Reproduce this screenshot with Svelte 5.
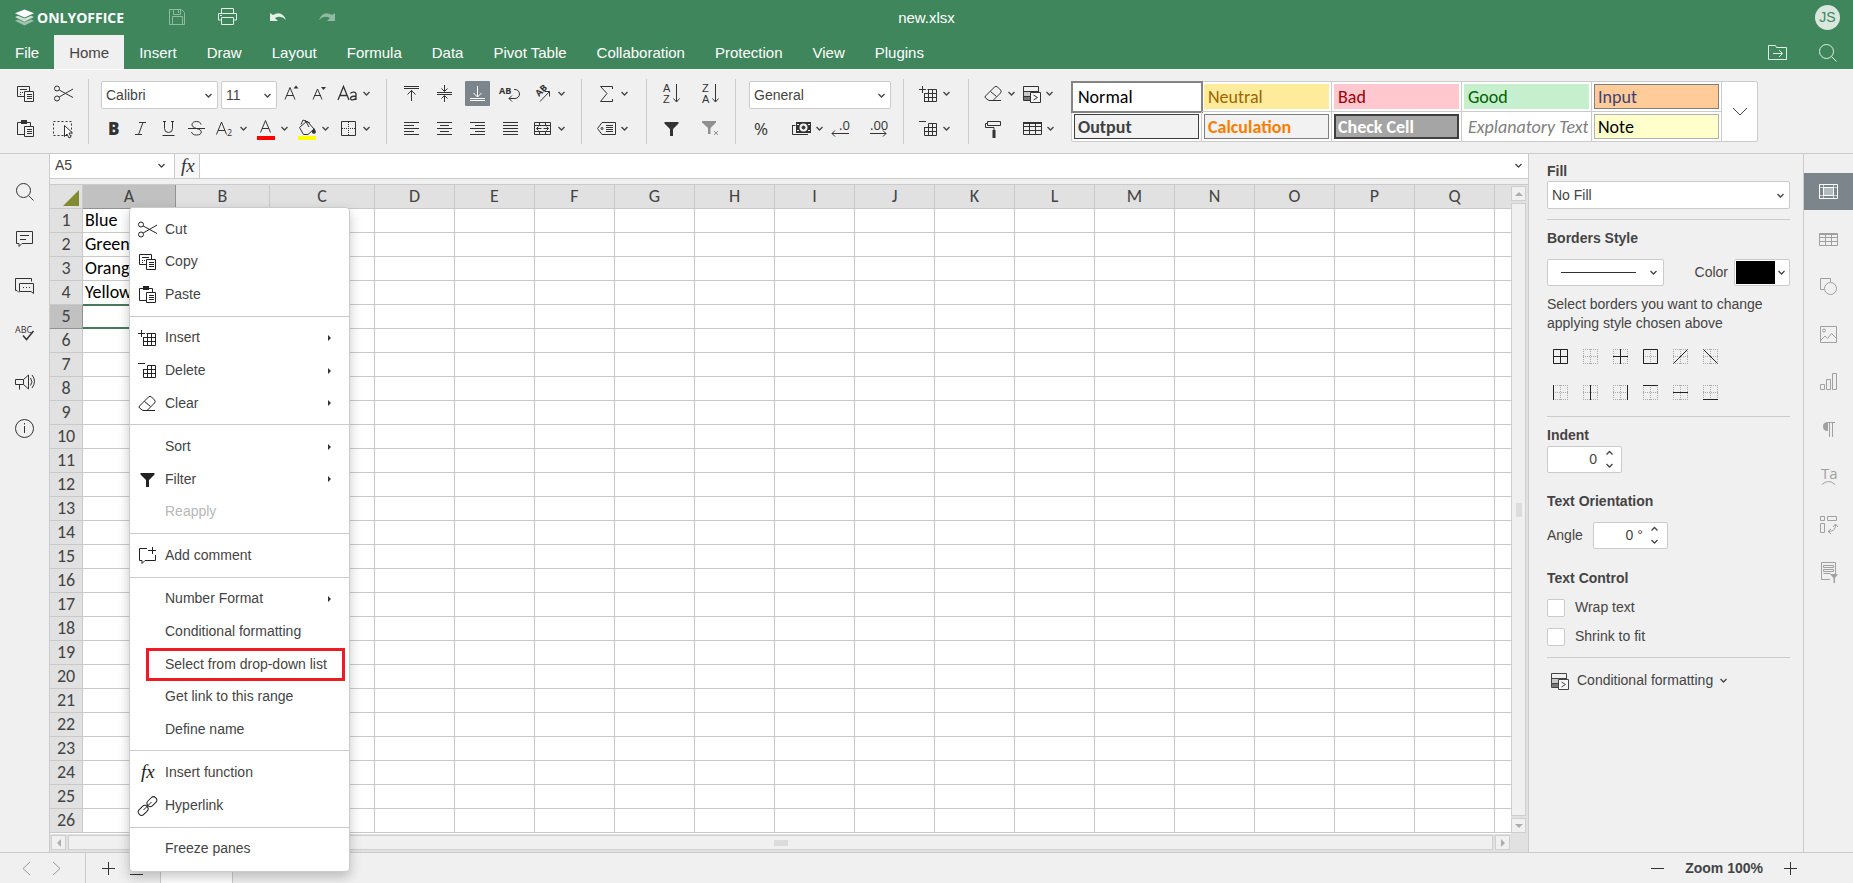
<script>
  // Spreadsheet editor window: header, ribbon, grid with its context menu, cell settings panel.
  const txt = (x, y, size, s, extra = '') =>
    `<text x="${x}" y="${y}" font-size="${size}" fill="currentColor" stroke="none" font-family="Open Sans, sans-serif" ${extra}>${s}</text>`;
  const letter = (y, s) =>
    `<text x="4" y="${y}" font-size="11" fill="currentColor" stroke="none" font-family="Liberation Sans, sans-serif">${s}</text>`;
  const p = (d, extra = '') => `<path d="${d}" ${extra}/>`;
  const solid = 'fill="currentColor" stroke="none"';

  // Icons are drawn on a 25px square.
  const icons = {
    copy: p('M11 15.5H4.5V5.5H16.5V10M7 8.5h7M7 11.5h1M9 11.5h1M7 13.5h1') + p('M11.5 10.5h9v10h-9zM14 13.5h5M14 15.5h5M14 17.5h5'),
    cut: '<circle cx="6" cy="7.5" r="2.5"/><circle cx="6" cy="17.5" r="2.5"/>' + p('M8.2 9 22 16.5M8.2 16 22 8'),
    paste: p('M11 18.5H4.5V6.5H17.5V10') + p('M8 4h6v4H8z', solid) + p('M11.5 10.5h9v10h-9zM14 13.5h5M14 15.5h5M14 17.5h5'),
    selectAll: p('M2.5 5.5H20.5V19.5H2.5Z', 'stroke-dasharray="2 2"') + p('M13.5 9.5v11l2.5-2.5 2 4 2-1-2-4h3.5z', 'fill="#fff"'),
    bold: txt(7, 19, 17, 'B', 'font-weight="800"'),
    italic: p('M10 6.5h7M6 18.5h7M14 6.5 9.5 18.5'),
    underline: p('M7.5 5v7.5a4 4 0 0 0 8 0V5M5.5 19.5h12M6 5.5h3M14 5.5h3'),
    strike: p('M16 8.5c-.5-2-2-3-4.5-3s-4.5 1-4.5 3 1.5 3 4.5 4 4.800 1.5 4.800 3.5-2 3-4.800 3-4.5-1-5-3M3 12.5h17'),
    subscript: p('M3.5 18.5 8.5 6 13.5 18.5M5 14.5h7') + txt(14, 20, 9, '2'),
    fontColor: p('M6.5 16.5 11.5 4.5 16.5 16.5M8 12.5h7') + p('M3 20h18v4H3z', 'fill="#f00" stroke="none"'),
    fillColor: p('M4.5 11.5 12 5l7 8-6 5.5H8.5zM6 8.5 8 4l7 3M10 4l4 7') + p('M19 12c2 3 2.5 4 1 5.5-2 .8-3.5-.5-3-2.5z', solid) + p('M3 20h18v4H3z', 'fill="#ff0" stroke="none"'),
    borders: p('M5.5 5.5h14v14h-14z') + p('M12.5 6v13M6 12.5h13', 'stroke-dasharray="1 1"'),
    fontUp: p('M5 18.5 10 6.5 15 18.5M6.5 14.5h7') + p('M13.5 7.5l2.5-3 2.5 3z', solid),
    fontDown: p('M5 18.5 9.5 8 14 18.5M6.5 14.5h6.5') + p('M13 6h5l-2.5 3z', solid),
    changeCase: p('M2 19 7.500 5.500 13 19M4 14.500h7.500', 'stroke-width="1.3"') + p('M20 19v-6c0-2.500-4.500-2.500-5.500-.5M20 15c-3.500 0-5.500.5-5.500 2.300 0 2.500 4 2 5.500-.5', 'stroke-width="1.3"'),
    alignTop: p('M5 5.5h15M5 7.5h15M12.5 9v11M8.5 13.5l4-4 4 4'),
    alignMiddle: p('M5 11.5h15M5 13.5h15M12.5 4v6M9.5 7.5l3 3 3-3M12.5 21v-6M9.5 17.5l3-3 3 3'),
    alignBottom: p('M5 17.5h15M5 19.5h15M12.5 5v11M8.5 12l4 4 4-4'),
    wrap: txt(1, 13, 9, 'AB', 'font-weight="700"') + p('M16 8.5h1a4 4 0 0 1 0 9h-6M14 14.5l-3 3 3 3'),
    orient: txt(0, 0, 9, 'AB', 'font-weight="700" transform="translate(8 16) rotate(-45)"') + p('M9 20.5 18.5 10.5M14 10.5h4.5v5'),
    left: p('M5 6.5h15M5 9.5h10M5 12.5h15M5 15.5h10M5 18.5h15'),
    center: p('M5 6.5h15M8 9.5h9M5 12.5h15M8 15.5h9M5 18.5h15'),
    right: p('M5 6.5h15M10 9.5h10M5 12.5h15M10 15.5h10M5 18.5h15'),
    justify: p('M5 6.5h15M5 9.5h15M5 12.5h15M5 15.5h15M5 18.5h15'),
    merge: p('M3.5 6.5h16v12h-16zM3 9.5h17M3 15.5h17M8.5 6v3M14.5 6v3M8.5 16v3M14.5 16v3M5.5 12.5h5M12.5 12.5h5M7.5 10.5l-2 2 2 2M15.5 10.5l2 2-2 2'),
    sum: p('M18.5 8V5.5H6.5L13 12.5 6.5 20.5h12V18'),
    tag: p('M8 6.5h13.5v12H8L3.5 12.5zM12 9.5h7M12 11.5h7M12 13.5h7M12 15.5h7') + '<circle cx="8" cy="12.5" r="1"/>',
    sortAsc: letter(11, 'A') + letter(22, 'Z') + p('M17.5 3v18M14.5 17.5l3 3.500 3-3.500'),
    sortDesc: letter(11, 'Z') + letter(22, 'A') + p('M17.5 3v18M14.5 17.5l3 3.500 3-3.500'),
    filter: p('M5.5 6h14v1.500L14 13v7h-3v-7L5.5 7.500z', solid),
    clearFilter: p('M4 5h14v1.500L12.500 12v6H10v-6L4 6.500z', solid) + p('M16 15l4 4M20 15l-4 4'),
    percent: txt(5, 19, 17, '%'),
    money: p('M7 6h15v11H7z', solid) + '<circle cx="14.500" cy="11.500" r="4" fill="#f0f0f0" stroke="none"/><circle cx="14.500" cy="11.500" r="1.500" fill="currentColor"/>' + p('M8 8.500h2M19 8.500h2M8 14.500h2M19 14.500h2', 'stroke="#f0f0f0"') + p('M3.500 9v9.500H19M3.500 9.500h3'),
    decLess: txt(10, 14, 13, '.0') + p('M3 17.5h17M6 14.5l-3 3 3 3'),
    decMore: txt(4, 14, 13, '.00') + p('M4 17.5h16M17 14.5l3 3-3 3'),
    insertCells: p('M3 8.5h7M6.5 5v7') + p('M8 20.5h12.5V8.5h-9M8.5 12v8M8 12.5h12.5M8 16.5h12.5M12.5 8.5v12M16.5 8.5v12'),
    deleteCells: p('M3 5.5h7') + p('M8.5 11v8.5h12v-12h-8M8 11.5h12.5M8 15.5h12.5M12.5 7.5v12M16.5 7.5v12'),
    eraser: p('M4.5 15 13.5 6q1.500-1.500 3 0l3 3q1.500 1.500 0 3l-7.500 7.500H8L4.500 17q-1-1 0-2zM9.500 10.500l6 5M8 19.500h12'),
    condFormat: p('M5 10h15v5H5z', 'fill="#c8c8c8" stroke="none"') + p('M5 15h8v5H5z', 'fill="#777" stroke="none"') + p('M4.5 5.5h15V11M4.5 5.5v14H11M4.5 10.5h15M4.5 15.5H11') + p('M11.5 11.5h10v10h-10z', 'fill="#f8f8f8"') + p('M14.5 14l4 2.500-4 2.500'),
    brush: p('M6.5 5.5h13v4h-13zM6 7.5H4.500v4h8.500V14') + p('M11.500 14h3v8h-3z', solid),
    table: p('M3.5 6.5h18v12h-18zM3 10.5h19M3 14.5h19M9.5 8v11M15.5 8v11') + p('M3 6h19v2H3z', solid),
    comment: p('M4.5 5.5h16v12H10l-3 3v-3H4.500zM8 9.500h9M8 13.500h6'),
    chat: p('M3.5 4.500h16v3M3.500 4.500v12H5l2 2M7.500 9.500h14v10l-2.500-2H7.500zM11 13.500h1M14 13.500h1M17 13.500h1'),
    spell: txt(3, 12, 9, 'ABC') + p('M11 14.500l3.500 4 7-8.500', 'stroke-width="1.5"'),
    speaker: p('M3.5 10.5h8l5-4.5v14l-5-4.500H3.500zM7.500 16v4.500M11.500 10.500v5M18.500 9q3 4 0 7.500M20 6q5 6 0 13'),
    info: '<circle cx="12.5" cy="12.5" r="9"/>' + p('M12.5 10v7M12.5 7v1.500'),
    search: '<circle cx="11.5" cy="11.5" r="7"/>' + p('M16.5 16.5l5 5'),
    addComment: p('M12 5.5H4.5v12H7v3l3-3h10.500V12M13 7.500h8M17.500 4v7'),
    link: '<rect x="-6" y="-3.2" width="11" height="6.5" rx="3.2" transform="translate(8.5 17) rotate(-45)"/><rect x="-5" y="-3.2" width="11" height="6.5" rx="3.2" transform="translate(16.5 9) rotate(-45)"/>' + p('M8.5 17l8-8'),
    fx: `<text x="6" y="18" font-size="19" font-style="italic" fill="currentColor" stroke="none" font-family="Liberation Serif, serif">fx</text>`,
    save: p('M4.5 4.500h12l3 3v12h-15zM8.500 4.500v5h7v-5M13.500 5v3M7.500 19v-7.500h10V19'),
    print: p('M6.5 8V3.500h12V8M6.500 15H3.500V8.500h18V15h-3M6.500 12.500h12v7h-12zM5 10.500h2'),
    undo: p('M5 8v8h8l-3-3q6-3.500 11 2-4-10-13-5z', solid),
    redo: p('M20 8v8h-8l3-3q-6-3.500-11 2 4-10 13-5z', solid),
    folder: p('M3.5 19.5v-14h7l1 2h10v12zM8 13.500h9M14 10l3.500 3.500-3.500 3.500'),
    cellSet: p('M3.5 5.5h18v14h-18z') + p('M3.5 8.5h18M3.5 16.5h18M7.5 5.5v14M17.5 5.5v14', 'opacity=".6"') + p('M7.5 8.5h10v8h-10z', 'fill="#b5babf"'),
    tableSet: p('M3.5 6.5h18v12h-18zM3 10.5h19M3 14.5h19M9.5 6v12.500M15.500 6v12.500M3 7.500h19'),
    shape: p('M8 15.5H4.5V4.500h10V8') + '<circle cx="14.500" cy="14.500" r="6"/>',
    image: p('M4.5 4.500h16v16h-16zM5 18l4-4 2.500 2.500 4-5 5 5') + '<circle cx="8" cy="8.500" r="1.500"/>',
    chart: p('M4.5 15.5h4v5h-4zM10.5 10.5h4v10h-4zM16.5 4.500h4v16h-4z'),
    paragraph: p('M12 5v9Q7 14 7 9.500T12 5z', solid) + p('M11 5.500h8M13.500 5v15M16.500 5v15'),
    textArt: txt(5, 15, 15, 'Ta') + p('M6 20.500q6.500-6 13 0'),
    pivot: p('M4.5 4.500h4v4h-4zM11.500 4.500h9v4h-9zM4.500 11.500h4v9h-4zM12 19.500q8 0 7.500-7M17 15l2.500-3 2.500 3M15 17l-3 2.500 3 2.500'),
    slicer: p('M14 20.500H5.500v-17h14V15M7.500 6.500h10v2h-10zM7.500 10.500h10v2h-10zM7.500 14.500h7') + p('M14 15h8l-3 4v5h-1.500v-5z', solid),
    minus: p('M6 12.5h13'),
    plus: p('M6 12.5h13M12.5 6v13'),
    prev: p('M16 6l-7 6.500 7 6.500'),
    next: p('M9 6l7 6.500-7 6.500'),
    list: p('M6 10.500h13M6 14.500h13M6 18.500h13'),
  };

  const tabs = ['File', 'Home', 'Insert', 'Draw', 'Layout', 'Formula', 'Data', 'Pivot Table', 'Collaboration', 'Protection', 'View', 'Plugins'];

  const styles = [
    ['Normal', 'normal'], ['Neutral', 'neutral'], ['Bad', 'bad'], ['Good', 'good'], ['Input', 'input'],
    ['Output', 'output'], ['Calculation', 'calc'], ['Check Cell', 'check'], ['Explanatory Text', 'expl'], ['Note', 'note'],
  ];

  const columns = 'ABCDEFGHIJKLMNOPQ'.split('');
  const rows = Array.from({ length: 26 }, (_, i) => i + 1);
  const values = { 1: 'Blue', 2: 'Green', 3: 'Orange', 4: 'Yellow' };
  const activeRow = 5;

  const menu = [
    { label: 'Cut', icon: 'cut' }, { label: 'Copy', icon: 'copy' }, { label: 'Paste', icon: 'paste' }, null,
    { label: 'Insert', icon: 'insertCells', sub: true }, { label: 'Delete', icon: 'deleteCells', sub: true }, { label: 'Clear', icon: 'eraser', sub: true }, null,
    { label: 'Sort', sub: true }, { label: 'Filter', icon: 'filter', sub: true }, { label: 'Reapply', disabled: true }, null,
    { label: 'Add comment', icon: 'addComment' }, null,
    { label: 'Number Format', sub: true }, { label: 'Conditional formatting' }, { label: 'Select from drop-down list', marked: true },
    { label: 'Get link to this range' }, { label: 'Define name' }, null,
    { label: 'Insert function', icon: 'fx' }, { label: 'Hyperlink', icon: 'link' }, null,
    { label: 'Freeze panes' },
  ];

  const leftRail = [['search', 'Find'], ['comment', 'Comments'], ['chat', 'Chat'], ['spell', 'Spell checking'], ['speaker', 'Feedback'], ['info', 'About']];
  const rightRail = [
    ['cellSet', 'Cell settings'], ['tableSet', 'Table settings'], ['shape', 'Shape settings'], ['image', 'Image settings'], ['chart', 'Chart settings'],
    ['paragraph', 'Paragraph settings'], ['textArt', 'Text Art settings'], ['pivot', 'Pivot table settings'], ['slicer', 'Slicer settings'],
  ];

  // Solid line of each border preset, over the dotted 15px square.
  const presets = [
    ['All', 'M.5.5h14v14H.5zM7.5 0v15M0 7.5h15'], ['None', ''], ['Inside', 'M7.5 0v15M0 7.5h15'],
    ['Outside', 'M.5.5h14v14H.5z'], ['Diagonal up', 'M.5 14.5l14-14'], ['Diagonal down', 'M.5.5l14 14'],
    ['Left', 'M.5 0v15'], ['Inside vertical', 'M7.5 0v15'], ['Right', 'M14.5 0v15'],
    ['Top', 'M0 .5h15'], ['Inside horizontal', 'M0 7.5h15'], ['Bottom', 'M0 14.5h15'],
  ];

  let tab = $state('Home');
  let wrapText = $state(false);
  let shrink = $state(false);
</script>

{#snippet icon(name)}
  <svg class="icon" viewBox="0 0 25 25" aria-hidden="true">{@html icons[name]}</svg>
{/snippet}

{#snippet caret()}
  <svg class="caret" viewBox="0 0 9 6" aria-hidden="true"><path d="M1.500 1l3 3 3-3" /></svg>
{/snippet}

{#snippet btn(name, label, active = false)}
  <button class="btn" class:active aria-label={label}>{@render icon(name)}</button>
{/snippet}

{#snippet split(name, label)}
  <button class="btn split" aria-label={label}>{@render icon(name)}{@render caret()}</button>
{/snippet}

{#snippet combo(value, label, cls)}
  <span class="combo {cls}">
    <select aria-label={label}><option>{value}</option></select>
    {@render caret()}
  </span>
{/snippet}

{#snippet spinner(id, value)}
  <span class="spinner">
    <input {id} type="text" {value} />
    <span class="steps">
      <button aria-label="Increase"><svg class="caret" viewBox="0 0 9 6"><path d="M1.500 4.500l3-3 3 3" /></svg></button>
      <button aria-label="Decrease">{@render caret()}</button>
    </span>
  </span>
{/snippet}

<div class="app">
  <header>
    <div class="title">
      <div class="brand">
        <svg class="logo" viewBox="0 0 20 18" aria-hidden="true">
          <path d="M0 12l3-1.500 7 3 7-3 3 1.500-10 5z" opacity=".5" />
          <path d="M0 8l3-1.500 7 3 7-3 3 1.500-10 5z" opacity=".75" />
          <path d="M0 4l10-4 10 4-10 4.500z" />
        </svg>
        <span>ONLYOFFICE</span>
      </div>
      <div class="quick">
        <button class="btn faded" aria-label="Save">{@render icon('save')}</button>
        {@render btn('print', 'Print')}
        {@render btn('undo', 'Undo')}
        <button class="btn faded" aria-label="Redo">{@render icon('redo')}</button>
      </div>
      <span class="doc">new.xlsx</span>
      <span class="avatar">JS</span>
    </div>
    <nav>
      {#each tabs as t}
        <button class="tab" class:current={t === tab} onclick={() => (tab = t)}>{t}</button>
      {/each}
      <div class="nav-end">
        {@render btn('folder', 'Open file location')}
        {@render btn('search', 'Search')}
      </div>
    </nav>
  </header>

  <div class="ribbon">
    <div class="group clip">
      <div class="row">{@render btn('copy', 'Copy')}{@render btn('cut', 'Cut')}</div>
      <div class="row">{@render btn('paste', 'Paste')}{@render btn('selectAll', 'Select all')}</div>
    </div>
    <div class="group font">
      <div class="row">
        {@render combo('Calibri', 'Font', 'w-font')}
        {@render combo('11', 'Font size', 'w-size')}
        {@render btn('fontUp', 'Increment font size')}
        {@render btn('fontDown', 'Decrement font size')}
        {@render split('changeCase', 'Change case')}
      </div>
      <div class="row">
        {@render btn('bold', 'Bold')}
        {@render btn('italic', 'Italic')}
        {@render btn('underline', 'Underline')}
        {@render btn('strike', 'Strikethrough')}
        {@render split('subscript', 'Subscript')}
        {@render split('fontColor', 'Font color')}
        {@render split('fillColor', 'Fill color')}
        {@render split('borders', 'Borders')}
      </div>
    </div>
    <div class="group align">
      <div class="row">
        {@render btn('alignTop', 'Align top')}
        {@render btn('alignMiddle', 'Align middle')}
        {@render btn('alignBottom', 'Align bottom', true)}
        {@render btn('wrap', 'Wrap text')}
        {@render split('orient', 'Orientation')}
      </div>
      <div class="row">
        {@render btn('left', 'Align left')}
        {@render btn('center', 'Align center')}
        {@render btn('right', 'Align right')}
        {@render btn('justify', 'Justified')}
        {@render split('merge', 'Merge and center')}
      </div>
    </div>
    <div class="group wide">
      <div class="row">{@render split('sum', 'Summation')}</div>
      <div class="row">{@render split('tag', 'Named ranges')}</div>
    </div>
    <div class="group sort">
      <div class="row">{@render btn('sortAsc', 'Sort ascending')}{@render btn('sortDesc', 'Sort descending')}</div>
      <div class="row">
        {@render btn('filter', 'Filter')}
        <button class="btn faded" aria-label="Clear filter">{@render icon('clearFilter')}</button>
      </div>
    </div>
    <div class="group format">
      <div class="row">{@render combo('General', 'Number format', 'w-format')}</div>
      <div class="row number">
        {@render btn('percent', 'Percent style')}
        {@render split('money', 'Accounting style')}
        {@render btn('decLess', 'Decrease decimal')}
        {@render btn('decMore', 'Increase decimal')}
      </div>
    </div>
    <div class="group wide">
      <div class="row">{@render split('insertCells', 'Insert cells')}</div>
      <div class="row">{@render split('deleteCells', 'Delete cells')}</div>
    </div>
    <div class="group last">
      <div class="row">{@render split('eraser', 'Clear')}{@render split('condFormat', 'Conditional formatting')}</div>
      <div class="row paint">{@render btn('brush', 'Copy style')}{@render split('table', 'Format as table')}</div>
    </div>
    <div class="gallery">
      <div class="swatches">
        {#each styles as [name, cls]}
          <button class="style" class:picked={cls === 'normal'}><span class={cls}>{name}</span></button>
        {/each}
      </div>
      <button class="more" aria-label="More cell styles">
        <svg viewBox="0 0 16 9" aria-hidden="true"><path d="M1 1l7 7 7-7" /></svg>
      </button>
    </div>
  </div>

  <main>
    <aside class="rail">
      <div class="stack left-stack">
        {#each leftRail as [name, label]}
          <button class="rail-btn" aria-label={label}>{@render icon(name)}</button>
        {/each}
      </div>
    </aside>

    <section class="editor">
      <div class="formula">
        <span class="name">
          <input aria-label="Cell name" value="A5" />
          {@render caret()}
        </span>
        <button class="fx" aria-label="Insert function">{@render icon('fx')}</button>
        <input class="expr" aria-label="Formula" />
        <button class="expand" aria-label="Expand formula bar">{@render caret()}</button>
      </div>
      <div class="sheet">
        <div class="cells">
          <table>
            <colgroup>
              <col class="c-num" /><col class="c-a" /><col class="c-b" /><col class="c-c" />
              {#each columns.slice(3) as c (c)}<col class="c-std" />{/each}
              <col />
            </colgroup>
            <thead>
              <tr>
                <th aria-label="Select all"><svg class="corner" viewBox="0 0 16 16"><path d="M16 0v16H0z" /></svg></th>
                {#each columns as c}<th class:hot={c === 'A'}>{c}</th>{/each}
                <th class="rest"></th>
              </tr>
            </thead>
            <tbody>
              {#each rows as r}
                <tr>
                  <th class:hot={r === activeRow}>{r}</th>
                  {#each columns as c}
                    <td class:sel={c === 'A' && r === activeRow}>{c === 'A' ? (values[r] ?? '') : ''}</td>
                  {/each}
                  <td class="rest"></td>
                </tr>
              {/each}
            </tbody>
          </table>
        </div>
        <div class="vscroll">
          <button aria-label="Scroll up"><svg viewBox="0 0 8 8"><path d="M0 6l4-4 4 4z" /></svg></button>
          <div class="track"><i></i></div>
          <button aria-label="Scroll down"><svg viewBox="0 0 8 8"><path d="M0 2l4 4 4-4z" /></svg></button>
        </div>
        <div class="hscroll">
          <button aria-label="Scroll left"><svg viewBox="0 0 8 8"><path d="M6 0L2 4l4 4z" /></svg></button>
          <div class="track"><i></i></div>
          <button aria-label="Scroll right"><svg viewBox="0 0 8 8"><path d="M2 0l4 4-4 4z" /></svg></button>
        </div>
        <div class="scroll-corner"></div>
      </div>
    </section>

    <section class="panel">
      <label class="head" for="fill">Fill</label>
      <span class="combo full">
        <select id="fill"><option>No Fill</option></select>
        {@render caret()}
      </span>
      <hr class="first" />
      <h2 class="head">Borders Style</h2>
      <div class="line-row">
        <button class="pick line" aria-label="Border line style"><span></span>{@render caret()}</button>
        <span class="color-label" id="color-label">Color</span>
        <button class="pick color" aria-labelledby="color-label"><span></span>{@render caret()}</button>
      </div>
      <p>Select borders you want to change applying style chosen above</p>
      <div class="presets">
        {#each presets as [label, d]}
          <button aria-label={label}>
            <svg viewBox="0 0 15 15" aria-hidden="true">
              <path class="dots" d="M0 .5h15M0 7.500h15M0 14.500h15M.5 0v15M7.500 0v15M14.500 0v15" />
              <path {d} />
            </svg>
          </button>
        {/each}
      </div>
      <hr />
      <label class="head indent" for="indent">Indent</label>
      {@render spinner('indent', '0')}
      <h2 class="head orient">Text Orientation</h2>
      <div class="angle">
        <label for="angle">Angle</label>
        {@render spinner('angle', '0 °')}
      </div>
      <h2 class="head control">Text Control</h2>
      <label class="check-row"><input type="checkbox" bind:checked={wrapText} />Wrap text</label>
      <label class="check-row"><input type="checkbox" bind:checked={shrink} />Shrink to fit</label>
      <hr class="end" />
      <button class="cond">{@render icon('condFormat')}Conditional formatting{@render caret()}</button>
    </section>

    <aside class="rail right">
      <div class="stack right-stack">
        {#each rightRail as [name, label], i}
          <button class="rail-btn" class:on={i === 0} aria-label={label}>{@render icon(name)}</button>
        {/each}
      </div>
    </aside>
  </main>

  <footer>
    <div class="sheet-nav">{@render btn('prev', 'Previous sheet')}{@render btn('next', 'Next sheet')}</div>
    <div class="sheet-tools">{@render btn('plus', 'Add sheet')}{@render btn('list', 'List of sheets')}</div>
    <button class="sheet-tab" aria-label="Current sheet"></button>
    <div class="zoom">
      {@render btn('minus', 'Zoom out')}
      <span>Zoom 100%</span>
      {@render btn('plus', 'Zoom in')}
    </div>
  </footer>

  <div class="menu" role="menu">
    {#each menu as item}
      {#if item}
        <button class="item" class:marked={item.marked} role="menuitem" disabled={item.disabled}>
          <span class="slot">{#if item.icon}{@render icon(item.icon)}{/if}</span>
          {item.label}
          {#if item.sub}<svg class="sub" viewBox="0 0 3 6" aria-hidden="true"><path d="M0 0l3 3-3 3z" /></svg>{/if}
        </button>
      {:else}
        <div class="sep" role="separator"></div>
      {/if}
    {/each}
  </div>
</div>

<style>
  :global(body) { margin: 0; background: #f0f0f0; }
  .app {
    --line: #cbcbcb; --text: #444; --green: #40865c; --bg: #f0f0f0;
    position: relative; display: flex; flex-direction: column; height: 100vh; overflow: hidden;
    background: var(--bg); color: var(--text); font: 14px/19px "Liberation Sans", Arial, sans-serif;
  }
  button, input, select { font: inherit; color: inherit; margin: 0; padding: 0; border: 0; background: none; border-radius: 0; }
  input:focus, select:focus { outline: none; }
  .icon { display: block; flex: none; width: 25px; height: 25px; fill: none; stroke: currentColor; stroke-width: 1; }
  .caret { display: block; flex: none; width: 9px; height: 6px; fill: none; stroke: #444; stroke-width: 1.3; }
  .btn { display: flex; align-items: center; flex: none; height: 25px; color: #333; }
  .btn.active { background: #7d858c; color: #fff; border-radius: 1px; }
  .split { width: 38px; gap: 1px; }
  .faded { opacity: .5; }

  /* header */
  header { flex: none; background: var(--green); color: #fff; }
  header .btn { color: #e4efe8; }
  .title { position: relative; display: flex; align-items: center; height: 35px; padding: 0 13px 0 15px; }
  .brand { display: flex; align-items: center; gap: 3px; width: 150px; font: 700 14px/18px "Open Sans", sans-serif; }
  .logo { width: 19px; height: 18px; fill: #fff; }
  .quick { display: flex; gap: 25px; flex: 1; }
  .doc { position: absolute; left: 50%; top: 8px; transform: translateX(-50%); font-size: 15px; }
  .avatar { width: 25px; height: 25px; border-radius: 50%; background: #d9e7de; color: var(--green); text-align: center; line-height: 24px; }
  nav { display: flex; height: 34px; padding-right: 13px; border-bottom: 1px solid #fafafa; }
  .tab { padding: 0 15px; font-size: 15px; color: #fff; }
  .tab.current { background: var(--bg); color: var(--text); }
  .nav-end { display: flex; align-items: center; gap: 25px; margin-left: auto; }

  /* ribbon */
  .ribbon { display: flex; flex: none; height: 65px; padding: 9px 0; border-bottom: 1px solid var(--line); }
  .group { display: flex; flex-direction: column; gap: 10px; flex: none; padding: 2px 12px 0; border-right: 1px solid var(--line); }
  .group.wide { padding-right: 14px; }
  .group.format { padding-left: 13px; }
  .group.last { padding-right: 11px; border: 0; }
  .row { display: flex; align-items: flex-start; height: 25px; }
  .clip .row { gap: 13px; padding-left: 1px; }
  .font .row { gap: 3px; }
  .align .row { gap: 8px; }
  .sort .row { gap: 14px; }
  .number { display: grid; grid-template-columns: 40px 40px 37px 25px; }
  .paint { gap: 14px; }
  .combo { position: relative; display: block; flex: none; box-sizing: border-box; height: 28px; border: 1px solid var(--line); border-radius: 2px; background: #fff; }
  .combo select { appearance: none; width: 100%; height: 100%; padding-left: 4px; background: transparent; }
  .combo .caret { position: absolute; right: 4px; top: 11px; pointer-events: none; }
  .w-font { width: 117px; }
  .w-size { width: 56px; }
  .w-format { width: 142px; }
  .gallery { display: flex; flex: none; height: 59px; margin: 2px 0 0 2px; border: 1px solid var(--line); border-radius: 2px; background: #fff; }
  .swatches { display: grid; grid-template-columns: repeat(5, 130px); grid-template-rows: 30px 29px; }
  .style { padding: 2px; border-right: 1px solid var(--line); border-bottom: 1px solid var(--line); font: 18px/25px Carlito, Lato, sans-serif; text-align: left; }
  .style:nth-child(n + 6) { border-bottom: 0; }
  .style.picked { outline: 2px solid #848484; outline-offset: -1px; }
  .style span { display: block; box-sizing: border-box; height: 25px; padding-left: 3px; border: 1px solid transparent; overflow: hidden; white-space: nowrap; }
  .style .normal { color: #000; }
  .style .neutral { background: #ffeb9c; color: #9c6500; }
  .style .bad { background: #ffc7ce; color: #9c0006; }
  .style .good { background: #c6efce; color: #006100; }
  .style .input { background: #ffcc99; border-color: #7f7f7f; color: #3f3f76; }
  .style .output { background: #f2f2f2; border-color: #3f3f3f; color: #3f3f3f; font-weight: 700; }
  .style .calc { background: #f2f2f2; border-color: #7f7f7f; color: #fa7d00; font-weight: 700; }
  .style .check { background: #a5a5a5; border: 2px solid #3f3f3f; padding-left: 2px; line-height: 23px; color: #fff; font-weight: 700; }
  .style .expl { color: #7f7f7f; font-style: italic; }
  .style .note { background: #ffffcc; border-color: #b2b2b2; color: #000; }
  .more { display: grid; place-items: center; width: 35px; }
  .more svg { width: 16px; height: 9px; fill: none; stroke: #444; }

  /* body */
  main { display: flex; flex: 1; min-height: 0; }
  .rail { flex: none; width: 49px; padding-top: 19px; border-right: 1px solid var(--line); }
  .rail.right { border-right: 0; border-left: 1px solid var(--line); }
  .stack { display: flex; flex-direction: column; justify-content: space-between; }
  .left-stack { height: 274px; }
  .right-stack { height: 417px; }
  .rail-btn { display: grid; place-items: center; height: 37px; color: #333; }
  .right .rail-btn { color: #a0a0a0; }
  .right .rail-btn.on { background: #7d858c; color: #fff; }

  .editor { display: flex; flex-direction: column; flex: 1; min-width: 0; }
  .formula { display: flex; flex: none; height: 24px; background: #fff; border-bottom: 1px solid var(--line); }
  .name { display: flex; align-items: center; width: 124px; border-right: 1px solid var(--line); }
  .name input { flex: 1; min-width: 0; padding: 0 0 2px 5px; }
  .name .caret { margin-right: 8px; }
  .fx { width: 25px; background: #f7f7f7; border-right: 1px solid var(--line); color: #333; }
  .expr { flex: 1; min-width: 0; padding: 0 6px; }
  .expand { padding-right: 5px; }
  .sheet { display: grid; grid-template: minmax(0, 1fr) 18px / minmax(0, 1fr) 17px; flex: 1; min-height: 0; margin-top: 5px; border-top: 1px solid var(--line); }
  .cells { overflow: hidden; background: #fff; }
  table { width: 100%; table-layout: fixed; border-collapse: separate; border-spacing: 0; font: 18px/23px Carlito, Lato, sans-serif; }
  .c-num { width: 33px; }
  .c-a { width: 93px; }
  .c-b { width: 94px; }
  .c-c { width: 105px; }
  .c-std { width: 80px; }
  th, td { box-sizing: border-box; height: 24px; padding: 0; border-right: 1px solid #c9c9c9; border-bottom: 1px solid #c9c9c9; }
  th { background: #e1e1e1; font-weight: 400; color: #444; }
  th.hot { background: #c1c1c1; border-color: #929292; }
  td { padding-left: 2px; color: #000; white-space: nowrap; }
  .rest { border-right: 0; }
  .sel { border-bottom-color: #48795a; box-shadow: 0 -1px #48795a, inset 0 1px #48795a, inset 0 -1px #48795a; }
  .corner { display: block; width: 16px; height: 16px; margin: 2px 0 0 13px; fill: #848a2f; }

  .vscroll, .hscroll { display: flex; gap: 2px; background: #e1e1e1; }
  .vscroll { flex-direction: column; padding: 1px 2px 1px 0; }
  .hscroll { padding: 1px 1px 2px; }
  .vscroll button, .hscroll button, .track { display: grid; place-items: center; box-sizing: border-box; flex: none; width: 15px; height: 15px; border: 1px solid #cfcfcf; background: #f0f0f0; }
  .vscroll svg, .hscroll svg { width: 8px; height: 8px; fill: #adadad; }
  .vscroll .track { flex: 1; height: auto; }
  .hscroll .track { flex: 1; width: auto; }
  .track i { width: 6px; height: 14px; background: #dcdcdc; }
  .hscroll .track i { width: 14px; height: 6px; }
  .scroll-corner { background: #e1e1e1; }

  /* cell settings */
  .panel { flex: none; box-sizing: border-box; width: 275px; padding: 8px 13px 0 18px; border-left: 1px solid var(--line); }
  .head { display: block; margin: 0; font-size: 14px; line-height: 19px; font-weight: 700; }
  hr { height: 1px; margin: 16px 0 9px; border: 0; background: var(--line); }
  hr.first { margin: 10px 0 9px; }
  .line-row { display: flex; align-items: center; height: 27px; margin: 11px 0 9px; }
  .pick { display: flex; align-items: center; box-sizing: border-box; height: 27px; border: 1px solid var(--line); border-radius: 2px; background: #fff; }
  .pick.line { width: 117px; padding: 0 5px 0 13px; justify-content: space-between; }
  .line span { width: 75px; height: 1px; background: #333; }
  .color-label { margin-left: auto; padding-right: 6px; }
  .pick.color { width: 56px; padding: 0 3px 0 1px; justify-content: space-between; }
  .color span { width: 39px; height: 23px; background: #000; }
  p { margin: 0; }
  .presets { display: grid; grid-template-columns: repeat(6, 15px); gap: 21px 15px; margin: 16px 6px 0; }
  .presets svg { display: block; width: 15px; height: 15px; fill: none; stroke: #222; }
  .dots { stroke: #aaa; stroke-dasharray: 1 1; }
  .indent { margin-bottom: 1px; }
  .spinner { display: flex; box-sizing: border-box; width: 75px; height: 27px; border: 1px solid var(--line); border-radius: 2px; background: #fff; }
  .spinner input { width: 49px; text-align: right; }
  .steps { display: flex; flex: 1; flex-direction: column; justify-content: space-between; align-items: center; padding: 3px 0; }
  .orient { margin-top: 19px; }
  .angle { display: flex; align-items: center; gap: 10px; margin: 11px 0 20px; }
  .check-row { display: flex; align-items: center; gap: 10px; height: 19px; margin-top: 10px; }
  .check-row input { appearance: none; box-sizing: border-box; width: 18px; height: 18px; border: 1px solid var(--line); border-radius: 2px; background: #fff; }
  .check-row input:checked { background: var(--green); }
  hr.end { margin: 11px 0 10px; }
  .cond { display: flex; align-items: center; gap: 5px; }
  .cond .caret { margin-left: 1px; }

  /* status bar */
  footer { display: flex; flex: none; height: 30px; border-top: 1px solid var(--line); }
  .sheet-nav { display: flex; align-items: center; gap: 5px; width: 71px; padding-left: 14px; border-right: 1px solid var(--line); }
  .sheet-nav .btn { color: #999; }
  .sheet-tools { display: flex; align-items: center; gap: 3px; width: 64px; padding-left: 10px; border-right: 1px solid var(--line); }
  .sheet-tab { width: 72px; background: #fff; border-right: 1px solid var(--line); }
  .zoom { display: flex; align-items: center; gap: 15px; margin-left: auto; padding-right: 50px; font-weight: 700; }

  /* context menu */
  .menu {
    position: absolute; left: 129px; top: 207px; display: flex; flex-direction: column; box-sizing: border-box; width: 221px; height: 665px;
    padding: 5px 0 6px; border: 1px solid var(--line); border-radius: 4px; background: #fff; box-shadow: 0 5px 12px rgba(0, 0, 0, .22);
  }
  .item { display: flex; align-items: center; flex: 1; min-height: 0; padding: 0 18px 0 5px; text-align: left; white-space: nowrap; }
  .slot { flex: none; width: 30px; color: #222; }
  .item:disabled { color: #b8b8b8; }
  .item.marked { position: relative; }
  .item.marked::after { content: ""; position: absolute; inset: 0 4px -1px 16px; border: 3px solid #ed1c24; }
  .sub { width: 3px; height: 6px; margin-left: auto; fill: #333; }
  .sep { flex: none; height: 1px; margin: 5px 0; background: var(--line); }
</style>
